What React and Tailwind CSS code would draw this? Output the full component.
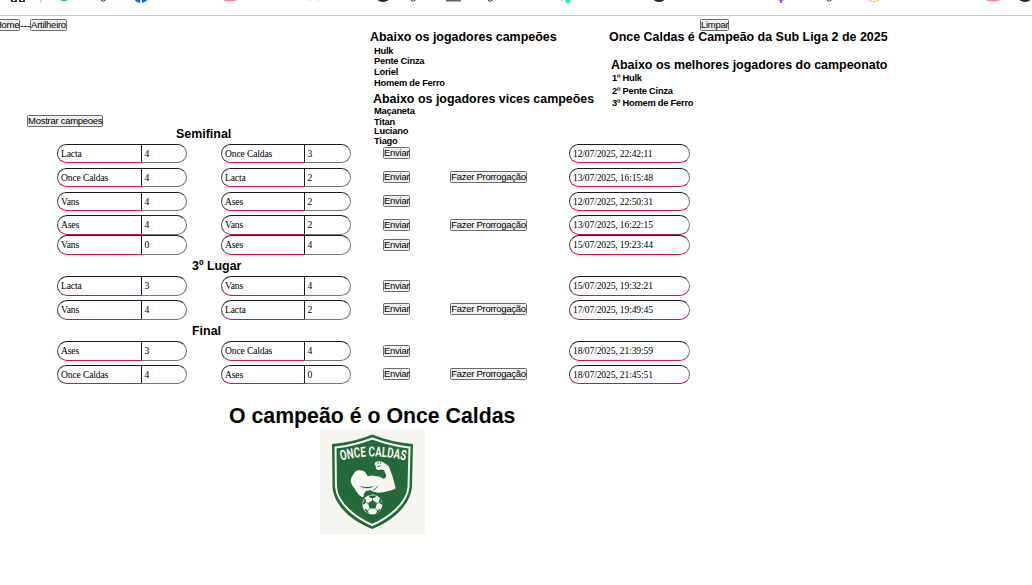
const rows = [
  { t1: "Lacta", s1: 4, t2: "Once Caldas", s2: 3, date: "12/07/2025, 22:42:11", box: "h-[19px]", gap: "mt-0", btn: "mt-[3px]" },
  { t1: "Once Caldas", s1: 4, t2: "Lacta", s2: 2, date: "13/07/2025, 16:15:48", extra: true, box: "h-[19px]", gap: "mt-[5px]", btn: "mt-[3px]" },
  { t1: "Vans", s1: 4, t2: "Ases", s2: 2, date: "12/07/2025, 22:50:31", box: "h-[19px]", gap: "mt-[5px]", btn: "mt-[3px]" },
  { t1: "Ases", s1: 4, t2: "Vans", s2: 2, date: "13/07/2025, 16:22:15", extra: true, box: "h-[20px]", gap: "mt-[4px]", btn: "mt-[4px]" },
  { t1: "Vans", s1: 0, t2: "Ases", s2: 4, date: "15/07/2025, 19:23:44", box: "h-[20px]", gap: "mt-0", btn: "mt-[4px]" },
];
const third = [
  { t1: "Lacta", s1: 3, t2: "Vans", s2: 4, date: "15/07/2025, 19:32:21", box: "h-[20px]", gap: "mt-0", btn: "mt-[4px]" },
  { t1: "Vans", s1: 4, t2: "Lacta", s2: 2, date: "17/07/2025, 19:49:45", extra: true, box: "h-[20px]", gap: "mt-[4px]", btn: "mt-[3px]" },
];
const final = [
  { t1: "Ases", s1: 3, t2: "Once Caldas", s2: 4, date: "18/07/2025, 21:39:59", box: "h-[20px]", gap: "mt-0", btn: "mt-[4px]" },
  { t1: "Once Caldas", s1: 4, t2: "Ases", s2: 0, date: "18/07/2025, 21:45:51", extra: true, box: "h-[19px]", gap: "mt-[4px]", btn: "mt-[3px]" },
];

function Btn({ children, className = "" }) {
  return (
    <button
      className={`h-[12px] shrink-0 whitespace-nowrap rounded-[1.5px] border border-[#6b6b6b] bg-[#efefef] text-center text-[9.5px] leading-[10px] tracking-[-0.27px] text-black ${className}`}
    >
      {children}
    </button>
  );
}

function Team({ name, score, nameWidth, scoreWidth }) {
  return (
    <div className="flex h-full font-['Liberation_Serif',serif] text-[9.6px] tracking-[-0.15px]">
      <div className={`${nameWidth} flex h-full items-center rounded-l-[10px] border border-t-[#1c1c1c] border-r-[#1c1c1c] border-b-[#c2185b] border-l-[#444] pl-[3px] leading-[10px]`}>
        {name}
      </div>
      <div className={`${scoreWidth} flex h-full items-center rounded-r-[10px] border border-l-0 border-t-[#1c1c1c] border-r-[#777] border-b-[#777] pl-[2.5px] leading-[10px]`}>
        {score}
      </div>
    </div>
  );
}

function Match({ m }) {
  return (
    <div className={`flex ${m.box} ${m.gap} pl-[57px]`}>
      <Team name={m.t1} score={m.s1} nameWidth="w-[85px]" scoreWidth="w-[45px]" />
      <div className="w-[34px]" />
      <Team name={m.t2} score={m.s2} nameWidth="w-[84px]" scoreWidth="w-[46px]" />
      <div className="ml-[32px] w-[67px]">
        <Btn className={`block w-[27px] ${m.btn}`}>Enviar</Btn>
      </div>
      <div className="w-[119px]">
        {m.extra && <Btn className={`block w-[77px] ${m.btn}`}>Fazer Prorrogação</Btn>}
      </div>
      <div className="flex h-full w-[121px] items-center rounded-[10px] border border-t-[#1c1c1c] border-r-[#777] border-b-[#c2185b] border-l-[#444] pl-[3px] font-['Liberation_Serif',serif] text-[9.6px] leading-[10px] tracking-[-0.14px]">
        {m.date}
      </div>
    </div>
  );
}

function Heading({ children, className = "" }) {
  return <h3 className={`h-[14px] whitespace-nowrap text-[12.45px] font-bold leading-[14px] ${className}`}>{children}</h3>;
}

function Item({ children, className = "" }) {
  return <p className={`h-[10px] whitespace-nowrap text-[9.3px] font-bold leading-[10px] tracking-[-0.22px] ${className}`}>{children}</p>;
}

function BookmarkStrip() {
  return (
    <svg width="1032" height="15" viewBox="0 0 1032 15" className="block">
      <rect x="50" y="-20" width="73" height="29" rx="13" fill="#fdfdfd" />
      <path d="M11 0h6v2h-6zM19 0h6v2h-6z" fill="#333" />
      <path d="M13 0h2v1h-2zM21 0h2v1h-2z" fill="#fff" />
      <rect x="40" y="0" width="2" height="3" fill="#b9ecf5" />
      <ellipse cx="64" cy="-1" rx="4" ry="2" fill="#1db954" />
      <ellipse cx="141" cy="-3" rx="7" ry="6" fill="#0866ff" />
      <rect x="140" y="0" width="2" height="3" fill="#fff" />
      <ellipse cx="230" cy="-1" rx="8" ry="2.3" fill="#ff7f9d" />
      <path d="M308 0h4v1h-4zM317 0h3v1h-3z" fill="#eee" />
      <ellipse cx="383" cy="-2" rx="6" ry="4" fill="#24292f" />
      <rect x="446" y="0" width="15" height="1.5" fill="#666" />
      <rect x="561" y="0" width="2" height="1" fill="#ffd48a" />
      <circle cx="568" cy="0.5" r="2.5" fill="#12e5c0" />
      <ellipse cx="659" cy="-2" rx="6" ry="4" fill="#24292f" />
      <path d="M778 0h6l-2 1v2h-2v-2z" fill="#9b51f5" />
      <ellipse cx="874" cy="-4" rx="7" ry="5.5" fill="none" stroke="#f5a742" strokeWidth="1" strokeDasharray="3 1" />
      <ellipse cx="993" cy="-1" rx="8" ry="2.3" fill="#ff7f9d" />
      <ellipse cx="1025" cy="-2" rx="6" ry="4" fill="#24292f" />
      <g fill="none" stroke="#333" strokeWidth="1">
        <path d="M101 .5q3 2 5-1M411 .5q3 2 5-1M488 .5q3 2 5-1M827 .5q3 2 5-1" />
      </g>
    </svg>
  );
}

function Crest() {
  return (
    <svg width="105" height="105" viewBox="0 0 105 105" className="block">
      <rect width="105" height="105" fill="#f6f5ef" />
      <path d="M52.300 5.500Q72 13.500 93 15L92 58C90 78 70 93 52.300 100C34 93 14 78 12.500 58L12 15Q33 13.500 52.300 5.500Z" fill="#24693c" />
      <path d="M52.300 9.500Q71 16.500 89.500 18.500L88.500 58C87 75 68 89 52.300 96C36 89 17.500 75 16 58L15.500 18.500Q34 16.500 52.300 9.500Z" fill="none" stroke="#f6f5ef" strokeWidth="2" />
      <path id="crestArc" d="M21 31.500Q52.500 23.500 85.500 31.500" fill="none" />
      <text fill="#f6f5ef" fontFamily="Roboto, sans-serif" fontWeight="700" fontSize="14">
        <textPath href="#crestArc" textLength="65" lengthAdjust="spacingAndGlyphs">ONCE CALDAS</textPath>
      </text>
      <path d="M30.700 52.700Q31 48 33 46Q35 41.500 39 41.300Q43 41 45 43L48 47.500Q51 46 55 47Q60 47 64 50Q67 47 66 46L64 41Q61 40 58 41Q55 40 56 37Q54 36 55 33.500Q58 31.500 62.700 33L68.700 37Q73 47 75.700 59.300Q74 61 68 62Q62 64 58 63.700Q53 63 50 61Q48 62 46 62Q43 65 43.500 68L42 68Q37 65 35 60Q32 57 30.700 52.700Z" fill="#f6f5ef" />
      <path d="M39 56.500Q44 59 54 57Q50 60 46 59Q42 59 39 56.500Z" fill="#24693c" />
      <path d="M53 61Q56 60 58 57M61 36.500L57 38M58 33V35M60.500 33V35" fill="none" stroke="#24693c" strokeWidth=".8" />
      <circle cx="52.300" cy="75.500" r="10" fill="#f6f5ef" />
      <g fill="#24693c">
        <path d="M52.500 71L57 74.300L55.300 79.500H49.700L48 74.300Z" />
        <path d="M48 66.500H57L54.500 69H50.500ZM60.500 69.500L62.500 76L59.800 74.500L59 71ZM44.500 69.500L42.500 76L45.200 74.500L46 71ZM61 80.500L56 85L57 82L59.500 80ZM44 80.500L49 85L48 82L45.500 80Z" />
      </g>
      <path d="M52.500 71V68M57 74.300L60 73M55.300 79.500L57.500 82M49.700 79.500L47.500 82M48 74.300L45 73" stroke="#24693c" strokeWidth=".7" />
    </svg>
  );
}

export default function App() {
  return (
    <div className="h-[585px] w-[1032px] overflow-hidden bg-white font-['Liberation_Sans',Arial,sans-serif] text-black">
      <header className="h-[16px] border-b border-[#c9c9c9]">
        <BookmarkStrip />
      </header>

      <section className="flex h-[128px]">
        <div className="w-[370px] shrink-0 pt-[3px]">
          <nav className="flex h-[12px] items-center">
            <Btn className="-ml-[6px] w-[26px]">Home</Btn>
            <span className="w-[10px] whitespace-nowrap font-['Liberation_Serif',serif] text-[10.7px] leading-[12px]">---</span>
            <Btn className="w-[37px]">Artilheiro</Btn>
          </nav>
          <Btn className="ml-[27px] mt-[84px] block w-[76px]">Mostrar campeoes</Btn>
          <Heading className="pl-[176px]">Semifinal</Heading>
        </div>

        <div className="w-[239px] shrink-0 pt-[14px]">
          <Heading>Abaixo os jogadores campeões</Heading>
          <div className="pl-[4px]">
            <Item className="mt-[2px]">Hulk</Item>
            <Item>Pente Cinza</Item>
            <Item className="mt-px">Loriel</Item>
            <Item className="mt-px">Homem de Ferro</Item>
            <Heading className="-ml-px mt-[4px]">Abaixo os jogadores vices campeões</Heading>
            <Item>Maçaneta</Item>
            <Item className="mt-px">Titan</Item>
            <Item className="-mt-px">Luciano</Item>
            <Item>Tiago</Item>
          </div>
        </div>

        <div className="pt-[3px]">
          <Btn className="ml-[91px] block w-[29px]">Limpar</Btn>
          <Heading className="-mt-px">Once Caldas é Campeão da Sub Liga 2 de 2025</Heading>
          <Heading className="ml-[2px] mt-[14px]">Abaixo os melhores jogadores do campeonato</Heading>
          <div className="pl-[3px]">
            <Item className="mt-px">1º Hulk</Item>
            <Item className="mt-[3px]">2º Pente Cinza</Item>
            <Item className="mt-[2px]">3º Homem de Ferro</Item>
          </div>
        </div>
      </section>

      <main>
        {rows.map((m) => <Match key={m.date} m={m} />)}
        <Heading className="mb-[3px] mt-[4px] pl-[192px]">3º Lugar</Heading>
        {third.map((m) => <Match key={m.date} m={m} />)}
        <Heading className="mb-[3px] mt-[4px] pl-[192px]">Final</Heading>
        {final.map((m) => <Match key={m.date} m={m} />)}
      </main>

      <h1 className="mt-[20px] h-[25px] whitespace-nowrap pl-[229px] text-[21.3px] font-bold leading-[25px]">O campeão é o Once Caldas</h1>
      <div className="ml-[320px]">
        <Crest />
      </div>
    </div>
  );
}
